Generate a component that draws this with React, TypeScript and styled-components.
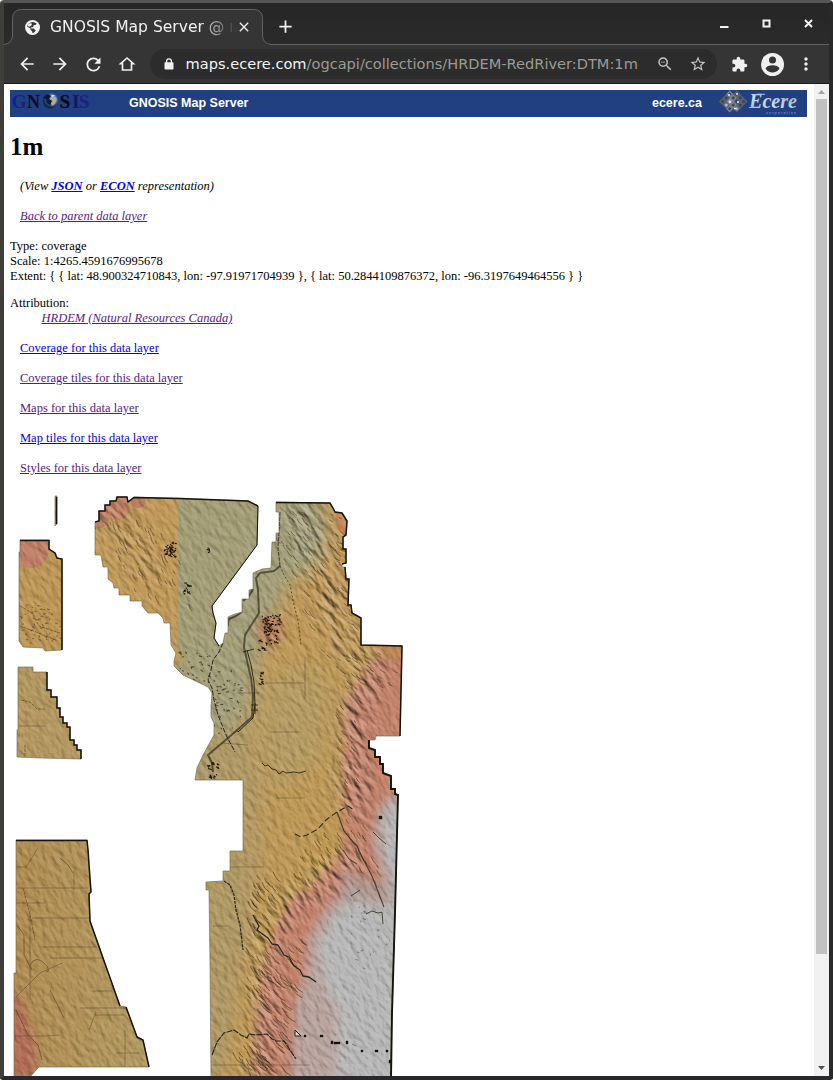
import React from "react";
import styled, { createGlobalStyle } from "styled-components";
import {
  MdArrowBack, MdArrowForward, MdRefresh, MdOutlineZoomOut,
  MdStarBorder, MdMoreVert, MdClose, MdAdd,
} from "react-icons/md";

const GlobalStyle = createGlobalStyle`
  * { box-sizing: border-box; }
  body { margin: 0; background: #fff; overflow: hidden; }
`;

const Window = styled.div`
  display: flex;
  flex-direction: column;
  width: 833px;
  height: 1080px;
  background: #2a2a2c;
  border-top: 3px solid #555;
  border-left: 4px solid #403e3b;
  border-right: 4px solid #29292a;
  border-bottom: 4px solid #28282c;
  border-radius: 4px 4px 3px 3px;
  overflow: hidden;
`;
const TabStrip = styled.div`
  display: flex;
  height: 42px;
  flex: none;
  padding: 6px 0 0 8px;
  background: linear-gradient(#262626, #2b2b2b);
  box-shadow: inset 0 -1px #626262;
`;
const Tab = styled.div`
  position: relative;
  display: flex;
  align-items: center;
  width: 251px;
  height: 36px;
  padding: 0 8px 0 13px;
  color: #f0f0f0;
  > * { flex: none; }
`;
const TabShape = styled.svg`
  position: absolute;
  left: -8px;
  top: 0;
`;
const TabTitle = styled.div`
  position: relative;
  width: 182px;
  margin-left: 10px;
  overflow: hidden;
  white-space: nowrap;
  font: 15.55px/22px "DejaVu Sans", sans-serif;
  mask-image: linear-gradient(90deg, #000 150px, transparent 186px);
`;
const TabClose = styled.div`
  position: relative;
  display: flex;
  margin-left: 4px;
`;
const NewTab = styled.div`
  display: flex;
  align-items: center;
  height: 35px;
  margin-left: 12px;
  color: #f2f2f2;
`;
const WindowButtons = styled.div`
  display: flex;
  margin-left: auto;
  padding: 10px 16px 0 0;
  gap: 33px;
`;
const Toolbar = styled.div`
  display: flex;
  align-items: center;
  height: 39px;
  flex: none;
  padding-left: 6px;
  background: #353535;
  border-bottom: 1px solid #1c1c1c;
`;
const ToolButton = styled.div<{ $w?: number; $color?: string }>`
  display: flex;
  align-items: center;
  justify-content: center;
  flex: none;
  width: ${(p) => p.$w ?? 33.4}px;
  height: 30px;
  color: ${(p) => p.$color ?? "#f0f0f0"};
  svg { flex: none; }
`;
const Omnibox = styled.div`
  display: flex;
  align-items: center;
  flex: none;
  width: 567px;
  height: 30px;
  margin-left: 6px;
  padding-left: 11px;
  border-radius: 15px;
  background: #2c2c2c;
`;
const Address = styled.div`
  flex: none;
  width: 460px;
  margin-left: 9px;
  white-space: nowrap;
  font: 14.58px/22px "DejaVu Sans", sans-serif;
  color: #9b9b96;
  b { font-weight: 400; color: #f3f3f1; }
`;
const Viewport = styled.div`
  display: flex;
  flex: 1;
  min-height: 0;
  background: #fff;
`;
const Page = styled.main`
  width: 810px;
  padding: 6px 7px 0 6px;
  overflow: hidden;
  color: #000;
  font: 12.5px/15px "Liberation Serif", serif;
`;
const Banner = styled.header`
  display: flex;
  align-items: center;
  height: 27px;
  background: #20407f;
  color: #fff;
  font: bold 12.5px/15px "Liberation Sans", sans-serif;
`;
const BannerTitle = styled.div`
  margin: -1px 0 0 29px;
`;
const BannerSite = styled.div`
  margin: -1px 17px 0 auto;
`;
const Heading = styled.h1`
  margin: 15px 0 0;
  padding-bottom: 1px;
  font-size: 25px;
  line-height: 30px;
`;
const Line = styled.div<{ $top?: number; $indent?: number; $italic?: boolean }>`
  margin-top: ${(p) => p.$top ?? 0}px;
  padding-left: ${(p) => p.$indent ?? 0}px;
  font-style: ${(p) => (p.$italic ? "italic" : "normal")};
  white-space: nowrap;
`;
const Link = styled.a<{ $visited?: boolean }>`
  color: ${(p) => (p.$visited ? "#551a8b" : "#0000ee")};
  text-decoration: underline;
`;
const Scrollbar = styled.div`
  display: flex;
  flex-direction: column;
  align-items: center;
  width: 15px;
  background: #f1f1f1;
`;
const Thumb = styled.div`
  width: 11px;
  height: 855px;
  background: #c1c1c1;
`;
const ArrowSlot = styled.div<{ $push?: boolean }>`
  display: flex;
  align-items: center;
  justify-content: center;
  height: ${(p) => (p.$push ? 17 : 15)}px;
  margin-top: ${(p) => (p.$push ? "auto" : "0")};
`;
const Picture = styled.svg`
  display: block;
  position: relative;
`;
const Terrain = styled.g`
  isolation: isolate;
`;
const Relief = styled.g`
  mix-blend-mode: hard-light;
`;

const GlobeIcon = () => (
  <Picture width="15" height="15" viewBox="0 0 15 15">
    <circle cx="7.500" cy="7.500" r="7.500" fill="#f2f2f2" />
    <path d="M7.500 1.900C9 2 10.500 2.600 11.500 3.600L11 4.800L8.700 5.200L8.200 6.900L5.900 7.400L6 8.500H9.200L9.700 10H10.900C10 12 9 13 7.300 13.100L7.200 11.200L5.600 9.900L5.500 8.600L2 6.500C2.600 4 4.800 2 7.500 1.900Z" fill="#353535" />
    <path d="M3.600 3.600L6.500 3.300L6.800 5L4.600 6.800L2.400 6.100Z" fill="#f2f2f2" />
  </Picture>
);
const HomeIcon = () => (
  <Picture width="18" height="18" viewBox="0 0 24 24">
    <path d="M12 4L3.500 11.500H6V20H18V11.500H20.500Z" fill="none" stroke="#f0f0f0" strokeWidth="2.200" />
  </Picture>
);
const LockIcon = () => (
  <Picture width="10" height="12" viewBox="0 0 10 12">
    <rect x="0.500" y="4.200" width="9" height="7.300" rx="0.800" fill="#f0f0f0" />
    <path d="M2.600 5V3.200a2.400 2.400 0 0 1 4.800 0V5" fill="none" stroke="#f0f0f0" strokeWidth="1.300" />
  </Picture>
);
const PuzzleIcon = () => (
  <Picture width="17" height="17" viewBox="0 0 24 24" fill="#f0f0f0">
    <path d="M20.500 11H19V7c0-1.100-.9-2-2-2h-4V3.500a2.500 2.500 0 0 0-5 0V5H4c-1.100 0-2 .9-2 2v3.800h1.500a2.700 2.700 0 0 1 0 5.400H2V20c0 1.100.9 2 2 2h3.800v-1.500a2.700 2.700 0 0 1 5.400 0V22H17c1.100 0 2-.9 2-2v-4h1.500a2.500 2.500 0 0 0 0-5z" />
  </Picture>
);
const AccountIcon = () => (
  <Picture width="23" height="23" viewBox="0 0 23 23">
    <circle cx="11.500" cy="11.500" r="11.500" fill="#f0f0f0" />
    <circle cx="11.500" cy="6.900" r="3.500" fill="#353535" />
    <path d="M4.600 15.700C5 13.300 9 12.300 11.500 12.300S18 13.300 18.400 15.700A8.300 8.300 0 0 1 4.600 15.700Z" fill="#353535" />
  </Picture>
);

const GnosisLogo = () => (
  <Picture width="90" height="27" viewBox="0 0 90 27">
    <defs>
      <radialGradient id="globe" cx="0.62" cy="0.35" r="0.7">
        <stop offset="0" stopColor="#b3c4d6" />
        <stop offset="0.45" stopColor="#406b9e" />
        <stop offset="1" stopColor="#061431" />
      </radialGradient>
    </defs>
    <g fontFamily="Liberation Serif, serif" fontSize="19.500">
      <text x="1.500" y="18" fill="#18208a">G</text>
      <text x="17" y="18" fill="#070c28" textLength="13" lengthAdjust="spacingAndGlyphs">N</text>
      <text x="49.500" y="18" fill="#05060f" fontWeight="bold">S</text>
      <text x="62" y="18" fill="#10186c">I</text>
      <text x="68.500" y="18" fill="#18208a">S</text>
    </g>
    <circle cx="40.500" cy="10.800" r="7.600" fill="url(#globe)" />
    <path d="M34 6l4-2 3 2-2 3 3 2-2 4-3-2-1-4-3-1z" fill="#0a1a33" />
    <path d="M42 8l4-1 1 3-2 4-3 2-1-3 2-2z" fill="#b9aa8e" />
    <path d="M41 5l3 0 1 1-3 1z" fill="#dfe6ea" />
  </Picture>
);

const DIAMONDS: [number, number][] = [
  [11, 3.5], [18, 3.5], [4, 10.8], [11, 10.8], [18, 10.8], [25, 10.8], [11, 18], [18, 18],
  [7.5, 7.2], [14.5, 7.2], [21.5, 7.2], [7.5, 14.4], [14.5, 14.4], [21.5, 14.4],
];
const EcereLogo = () => (
  <Picture width="88" height="27" viewBox="0 0 88 27">
    <defs>
      <linearGradient id="ecere" x1="0" y1="1" x2="1" y2="0">
        <stop offset="0" stopColor="#74bfe0" />
        <stop offset="0.4" stopColor="#d3dce5" />
        <stop offset="1" stopColor="#8fa0bd" />
      </linearGradient>
    </defs>
    {DIAMONDS.map(([x, y], i) => (
      <rect key={i} x={x - 1.7} y={y - 1.3} width="4" height="4"
        transform={`rotate(45 ${x} ${y})`}
        fill={i % 4 === 3 ? "#9dbbe0" : "#2c4678"} stroke={i % 3 ? "#626267" : "#858783"} strokeWidth="1.300" />
    ))}
    <path d="M9 5h2M17 4h2M10 12h2M18 12h2M15 18.500h2" stroke="#e6f2ff" strokeWidth="1.300" />
    <text x="30" y="18.300" fontFamily="Liberation Serif, serif" fontStyle="italic" fontSize="20"
      textLength="48" lengthAdjust="spacingAndGlyphs" fill="url(#ecere)">Ecere</text>
    <path d="M33 5.200q5-1.700 13-0.900" stroke="#b9c6d6" strokeWidth="1" fill="none" />
    <text x="47" y="23.500" fontFamily="Liberation Sans, sans-serif" fontSize="3.500" textLength="30" fill="#6f8dbb">corporation</text>
  </Picture>
);

/* Coverage outline: five disjoint survey blocks. */
const BLOCKS = [
  "M55 496L57 496L57 524L55 526Z",
  "M20 540H49V549L55 553L57 558L62 559V650L45 651L43 648L23 647L19 641V552H20Z",
  "M18 667H33V672H47V690H51V697H57V708H60V717H63V723H67V727H70V740H74V745H77V750H81V759L41 758L17 757V730H18Z",
  "M16 840H87L88 850L89 870L91 892L89 894L90 921L103 958L120 1006L126 1007L137 1037L143 1040L149 1067H39L29 1078H14V973H16Z",
  "M95 522L99 521V511H105V505H110V501H116L117 497H127L128 502L134 497L180 498.500L248 501L258 506L257 545L212 606L213 613L216 623L214 638L219 646L223 643L225 633H228V617L232 615L242 612V599H249V590L253 589V573L262 569L271 568L272 542H276V533H279V512H276V502L330 503L333 508L335 512L342 513L347 521L346 535L343 537V549H346V563L342 564V567H345L346 579H349L348 605H351L352 613L361 618V645L402 646L400 736H376L375 740H369V748L375 750V757H380V764H383V773L386 774L391 776V789H395V794L398 795L395 913L392 1013L391 1078H211L210 963L209 890H206V882L223 881V871H230V851H243V780H195L197 768L203 755L214 735V723L211 717V707L212 693L208 687L183 675L174 666V661L176 653L171 645L170 623H164L163 618L158 613H148L142 606V601H130V595H119V588H114L113 583L108 579V567H103L101 555H95Z",
].join("");

/* Deterministic noise so the ridges are the same on every render. */
const makeRandom = (seed: number) => () => {
  seed = (seed * 1664525 + 1013904223) % 4294967296;
  return seed / 4294967296;
};
type Band = { pts: [number, number][]; spread: number; n: number; dx: number; dy: number };
const BANDS: Band[] = [
  { pts: [[290, 510], [315, 560], [340, 630]], spread: 32, n: 60, dx: 5, dy: 6 },
  { pts: [[335, 510], [343, 570], [352, 630]], spread: 7, n: 34, dx: 5, dy: 3 },
  { pts: [[110, 515], [150, 560], [170, 600]], spread: 30, n: 45, dx: 3, dy: 6 },
  { pts: [[345, 650], [380, 690]], spread: 28, n: 32, dx: 5, dy: 4 },
  { pts: [[345, 710], [350, 790]], spread: 10, n: 24, dx: 3, dy: 4 },
  { pts: [[265, 870], [255, 930], [256, 1000]], spread: 12, n: 55, dx: 6, dy: 8 },
  { pts: [[285, 935], [275, 990], [265, 1065]], spread: 18, n: 58, dx: 9, dy: 9 },
  { pts: [[245, 1050], [262, 1076]], spread: 14, n: 22, dx: 8, dy: 10 },
  { pts: [[300, 880], [335, 830]], spread: 16, n: 24, dx: 4, dy: 6 },
  { pts: [[347, 810], [375, 880]], spread: 9, n: 20, dx: 4, dy: 6 },
];
const ridges = (b: Band, seed: number) => {
  const rnd = makeRandom(seed);
  let d = "";
  for (let i = 0; i < b.n; i++) {
    const t = rnd() * (b.pts.length - 1);
    const k = Math.floor(t);
    const f = t - k;
    const x = b.pts[k][0] * (1 - f) + b.pts[k + 1][0] * f + (rnd() - 0.5) * 2 * b.spread;
    const y = b.pts[k][1] * (1 - f) + b.pts[k + 1][1] * f + (rnd() - 0.5) * 12;
    const s = 0.4 + rnd() * 0.9;
    d += `M${x.toFixed(1)} ${y.toFixed(1)}q${(b.dx * s * 0.3).toFixed(1)} ${(b.dy * s * 0.7).toFixed(1)} ${(b.dx * s).toFixed(1)} ${(b.dy * s).toFixed(1)}`;
  }
  return d;
};
const specks = (x: number, y: number, w: number, h: number, n: number, seed: number) => {
  const rnd = makeRandom(seed);
  let d = "";
  for (let i = 0; i < n; i++) {
    d += `M${(x + rnd() * w).toFixed(1)} ${(y + rnd() * h).toFixed(1)}l${(rnd() * 2.4).toFixed(1)} ${(rnd() * 2 - 0.6).toFixed(1)}`;
  }
  return d;
};

const ElevationMap = () => (
  <Picture width="400" height="600" viewBox="10 476 400 600">
    <defs>
      <clipPath id="cover"><path d={BLOCKS} /></clipPath>
      <linearGradient id="south" x1="0" y1="0" x2="1" y2="0">
        <stop offset="0" stopColor="#b08c50" />
        <stop offset="1" stopColor="#b49b62" />
      </linearGradient>
      <filter id="soft4" x="-20%" y="-20%" width="140%" height="140%"><feGaussianBlur stdDeviation="5" /></filter>
      <filter id="soft9" x="-30%" y="-30%" width="160%" height="160%"><feGaussianBlur stdDeviation="9" /></filter>
      <filter id="fine" x="0" y="0" width="1" height="1" colorInterpolationFilters="sRGB">
        <feTurbulence type="fractalNoise" baseFrequency="0.2 0.1" numOctaves="4" seed="7" />
        <feColorMatrix values="0 0 0 0 0  0 0 0 0 0  0 0 0 0 0  1 0 0 0 0" />
        <feDiffuseLighting surfaceScale="0.750" diffuseConstant="0.610" lightingColor="#fff">
          <feDistantLight azimuth="165" elevation="55" />
        </feDiffuseLighting>
      </filter>
      <filter id="rough" x="0" y="0" width="1" height="1" colorInterpolationFilters="sRGB">
        <feTurbulence type="fractalNoise" baseFrequency="0.17 0.05" numOctaves="4" seed="21" />
        <feColorMatrix values="0 0 0 0 0  0 0 0 0 0  0 0 0 0 0  1 0 0 0 0" />
        <feDiffuseLighting surfaceScale="2.600" diffuseConstant="0.620" lightingColor="#fff">
          <feDistantLight azimuth="165" elevation="55" />
        </feDiffuseLighting>
      </filter>
      <mask id="hills" maskUnits="userSpaceOnUse" x="0" y="470" width="420" height="610">
        <g filter="url(#soft9)" fill="none" stroke="#fff" strokeLinecap="round">
          <path d="M300 510L320 570L340 630L370 670L355 720L353 800" strokeWidth="36" />
          <path d="M110 515L150 570" strokeWidth="36" stroke="#aaa" />
          <path d="M350 860L290 900L262 940L265 1000L262 1080" strokeWidth="34" />
          <circle cx="270" cy="632" r="8" strokeWidth="14" />
        </g>
      </mask>
    </defs>

    <g clipPath="url(#cover)">
      <Terrain>
        <rect x="0" y="470" width="420" height="610" fill="#c29a58" />
        <rect x="10" y="530" width="60" height="130" fill="#bd9755" />
        <rect x="10" y="660" width="80" height="110" fill="#b59860" />
        <rect x="10" y="835" width="145" height="245" fill="url(#south)" />
        {/* Low valley floor */}
        <path d="M177 490H262V560L240 700H200L177 690Z" fill="#a49e76" />
        <g filter="url(#soft9)">
          <path d="M270 490H322L328 545L312 570L290 580L265 640L250 700L240 735L215 800H180V690L225 600Z" fill="#a4a07a" />
          <path d="M205 735L250 725L262 790L258 860L225 1080H200V870L240 840V790H190Z" fill="#b09965" />
          <path d="M285 660L345 640L345 700L340 790L335 830L300 860L262 880V780Z" fill="#be9956" />
          <path d="M250 690L300 660L330 690L320 760L270 790Z" fill="#b69b62" />
          <path d="M340 800L300 870L262 910L235 1076H250L262 960L340 880Z" fill="#c19a50" />
        </g>
        <path d="M177 498V640" stroke="#6f6340" strokeWidth="4" opacity="0.6" filter="url(#soft4)" />
        {/* Escarpment */}
        <g filter="url(#soft4)">
          <path d="M410 655L375 658L352 690L344 712L343 800L342 852L318 880L290 900L274 930L262 975L254 1040V1085H410Z" fill="#c5836a" />
          <path d="M372 640H410V660L385 662Z" fill="#bd8755" />
          <path d="M399 792L384 800L375 822L373 848L385 882L382 900L352 886L326 908L310 935L307 970L296 1005L291 1085H410V792Z" fill="#b9a49e" />
          <path d="M402 800L386 812L382 840L392 880V905L355 900L335 915L318 945L324 980L338 1010L336 1085H410Z" fill="#b8b8b8" />
          <path d="M342 870L392 885L385 908L340 895Z" fill="#ad9b96" opacity="0.8" />
          <circle cx="270" cy="630" r="13" fill="#b97a50" />
          <path d="M8 985L22 1000L34 1040L38 1080H8Z" fill="#b26d55" />
        </g>
        <g opacity="0.9">
          <circle cx="31" cy="550" r="18" fill="#c07d6a" />
          <circle cx="117" cy="507" r="13.500" fill="#c48066" />
          <circle cx="100" cy="519" r="9" fill="#bd7d62" />
          <circle cx="138" cy="500" r="8" fill="#bb775f" />
        </g>
        <path d="M335 508l9 4 5 12-4 12-8-7z" fill="#c98759" />

        <Relief>
          <rect x="-500" y="100" width="1400" height="1400" transform="rotate(-30 210 780)" filter="url(#fine)" />
        </Relief>
        <Relief mask="url(#hills)">
          <rect x="-500" y="100" width="1400" height="1400" transform="rotate(-36 210 780)" filter="url(#rough)" />
        </Relief>
      </Terrain>

      <g fill="none" stroke="#2b1d0d" strokeLinecap="round">
        {BANDS.map((b, i) => (
          <path key={i} d={ridges(b, 11 + i * 37)} strokeWidth={i > 3 && i < 8 ? 0.9 : 0.8} opacity="0.55" />
        ))}
      </g>
      <g fill="none" stroke="#ffd9a0" strokeLinecap="round" transform="translate(-1.500 1)" opacity="0.25">
        {BANDS.map((b, i) => (
          <path key={i} d={ridges(b, 11 + i * 37)} strokeWidth="0.900" />
        ))}
      </g>

      {/* Floodway and river */}
      <g fill="none" stroke="#29281a" strokeLinejoin="round">
        <path d="M280 512L279 532L278 548L280 566" strokeWidth="1.200" strokeDasharray="4 1" opacity="0.7" />
        <path d="M280 566L274 571L260 573L256 578L258 590L259 613L245 635L244 647L248 665L251 678L253 695L252 717L228 738L208 755L212 763L213 772" strokeWidth="2" opacity="0.65" />
        <path d="M247 650L251 665L254 682L255 705L253 718L238 732" strokeWidth="1" />
        <path d="M280 566L284 575L290 585L294 605L298 620L301 645" strokeWidth="0.700" strokeDasharray="2 2" />
        <path d="M223 643L219 652L213 660L211 670L208 680L212 688L214 700L218 715L226 735L235 752" strokeWidth="1" strokeDasharray="5 1.500" />
        <path d="M253 589L249 596L243 601M242 612L236 616L229 619L226 632" strokeWidth="2" opacity="0.7" />
        <path d="M262 763L265 766L268 765L272 769L276 770L279 774L283 771L286 773L294 772L299 773L306 771M243 652L254 649M251 705H258M251 710H258M255 703V714" strokeWidth="0.900" />
        <path d="M224 881L230 885L234 895L236 910L240 925L243 950" strokeWidth="1.200" strokeDasharray="3 1" />
        <path d="M253 915L259 926L257 930L268 938L272 944L278 945L284 955L289 957L294 966L300 970L303 976L309 977L316 982" strokeWidth="1.300" />
        <path d="M212 1055L217 1042L224 1033L234 1030L241 1035L247 1038L249 1034L256 1035L267 1034L272 1039L276 1041L284 1041L290 1050L296 1059" strokeWidth="1.200" strokeDasharray="6 1" />
        <path d="M295 834L301 837L307 835L318 829L326 820L337 812L348 806L354 810" strokeWidth="1.100" strokeDasharray="6 3" />
        <path d="M337 812L344 831L352 841L357 846L362 857L372 876L384 907" strokeWidth="1.100" opacity="0.8" />
        <path d="M343 850L349 859L357 864M373 832L379 838L386 844M351 896L360 890M366 914L372 911L378 913L382 912L383 924" strokeWidth="1" opacity="0.8" />
      </g>
      <g fill="none" stroke="#3b2d18" strokeWidth="0.700" opacity="0.5">
        <path d="M265 683H304M305 657V699M237 693H260M270 732H300M221 743L248 745M230 867H264M213 926H228M276 798H305M210 1065H310" />
        <path d="M17 867H26L38 848M17 888H88M32 918H90M42 947H97M50 958H103M80 1008H126M15 1036H46L60 1035M92 991H112M16 903H45M95 1015H124M116 1053H140M125 1030V1067M89 1030L96 1012M16 997L40 973L62 963M19 726H46M30 910V1000M74 870V890" />
        <path d="M21 700L30 702L37 709L46 709M25 745V757M23 888L30 915L35 940M20 606L32 613L39 626L60 633M20 626L36 632L58 641" strokeWidth="1" strokeDasharray="3 1" />
        <path d="M17 925L24 935L24 955L32 970M30 965Q36 955 44 963T46 972M16 1010L28 1035L38 1045L42 1060M50 990L60 1010L64 1018M60 858L68 865L73 873" strokeWidth="1" />
      </g>
      <g fill="none" stroke="#1d150b" strokeWidth="1.100" strokeLinecap="round">
        <path d={specks(213, 665, 28, 70, 42, 5)} opacity="0.65" />
        <path d={specks(178, 652, 32, 30, 28, 8)} opacity="0.65" />
        <path d={specks(164, 542, 12, 17, 38, 14)} />
        <path d={specks(183, 583, 7, 11, 17, 19)} />
        <path d={specks(262, 613, 18, 12, 34, 28)} />
        <path d={specks(264, 625, 14, 20, 34, 33)} />
        <path d={specks(257, 640, 8, 10, 10, 42)} />
        <path d={specks(259, 672, 4, 12, 12, 47)} />
        <path d={specks(207, 548, 5, 6, 6, 49)} />
        <path d={specks(20, 605, 41, 38, 48, 52)} opacity="0.4" />
        <path d={specks(207, 762, 11, 16, 18, 61)} />
        <path d={specks(350, 900, 40, 80, 20, 88)} opacity="0.35" />
      </g>
      <path d="M176 653l6 8-2 5M175 660l4-6" fill="none" stroke="#c99b50" strokeWidth="2" />
      <path d="M295 1030l6 6h-6z" fill="#d6d6c9" stroke="#222" />
      <path d="M304 1035h2v2h-2zM320 1035h3v2h-3zM331 1041h2v3h-2zM334 1042h6v2h-6zM346 1041h2v3h-2zM352 1044l4 2M361 1050h2v2h-2zM375 1050h3v2h-3zM386 1050h2v2h-2zM379 816h3v3h-3zM389 1060h2v3h-2z" fill="#17130e" stroke="#17130e" strokeWidth="0.400" />
    </g>
    <path d={BLOCKS} fill="none" stroke="#6e6948" strokeWidth="0.800" opacity="0.8" />
    <g fill="none" stroke="#15130b" strokeWidth="1.500">
      <path d="M16 840.500H87L88 850L91 892L89 894L90 921L103 958L120 1006M126 1007L137 1037L143 1040L149 1067" />
      <path d="M20 540.500H49V549L55 553L57 558L62 559V650M56.500 497V524" />
      <path d="M47 672V690H51V697H57V708H60V717H63V723H67V727H70V740H74V745H77V750H81V759" />
      <path d="M95 522L99 521V511H105V505H110V501H116L117 497H127L128 502L134 497.500L180 498.500L248 501L258 506" />
      <path d="M276 502.500L330 503L333 508L335 512L342 513L347 521L346 535L343 537V549H346V563L342 564M345 567L346 579H349L348 605H351L352 613L361 618V645L402 646L400 736" />
      <path d="M369 740V748L375 750V757H380V764H383V773L391 776V789H395V794L398 795L395 913L392 1013L391 1078" strokeWidth="1.900" />
      <path d="M258 506L257 545L212 606L213 613L216 623L214 638L219 646" strokeWidth="1" />
    </g>
  </Picture>
);

const LAYER_LINKS: { text: string; visited: boolean }[] = [
  { text: "Coverage for this data layer", visited: false },
  { text: "Coverage tiles for this data layer", visited: true },
  { text: "Maps for this data layer", visited: true },
  { text: "Map tiles for this data layer", visited: false },
  { text: "Styles for this data layer", visited: true },
];

export default function App() {
  return (
    <>
      <GlobalStyle />
      <Window>
        <TabStrip>
          <Tab>
            <TabShape width="268" height="36" viewBox="0 0 268 36">
              <path d="M0 36V34.500Q8.500 34.500 8.500 26V9.500Q8.500 0.500 17.500 0.500H249.500Q258.500 0.500 258.500 9.500V26Q258.500 34.500 267 35.500V36Z" fill="#353535" />
              <path d="M0 35.500Q8.500 34.500 8.500 26V9.500Q8.500 0.500 17.500 0.500H249.500Q258.500 0.500 258.500 9.500V26Q258.500 34.500 267 35.500" fill="none" stroke="#646464" />
            </TabShape>
            <GlobeIcon />
            <TabTitle>GNOSIS Map Server @ m</TabTitle>
            <TabClose><MdClose size={16} /></TabClose>
          </Tab>
          <NewTab><MdAdd size={21} /></NewTab>
          <WindowButtons>
            <Picture width="9" height="9"><path d="M0 8h8.500" stroke="#f2f2f2" strokeWidth="2" /></Picture>
            <Picture width="9" height="9"><path d="M1.500 1.500h6v6h-6z" fill="none" stroke="#f2f2f2" strokeWidth="2" /></Picture>
            <Picture width="9" height="9"><path d="M1 1l7 7M8 1l-7 7" stroke="#f2f2f2" strokeWidth="2" /></Picture>
          </WindowButtons>
        </TabStrip>
        <Toolbar>
          <ToolButton><MdArrowBack size={20} /></ToolButton>
          <ToolButton><MdArrowForward size={20} /></ToolButton>
          <ToolButton><MdRefresh size={21} /></ToolButton>
          <ToolButton><HomeIcon /></ToolButton>
          <Omnibox>
            <ToolButton $w={16}><LockIcon /></ToolButton>
            <Address><b>maps.ecere.com</b>/ogcapi/collections/HRDEM-RedRiver:DTM:1m</Address>
            <ToolButton $w={38} $color="#c4c4c2"><MdOutlineZoomOut size={18} /></ToolButton>
            <ToolButton $w={29} $color="#c4c4c2"><MdStarBorder size={18} /></ToolButton>
          </Omnibox>
          <ToolButton $w={45}><PuzzleIcon /></ToolButton>
          <ToolButton $w={22}><AccountIcon /></ToolButton>
          <ToolButton $w={45}><MdMoreVert size={20} /></ToolButton>
        </Toolbar>
        <Viewport>
          <Page>
            <Banner>
              <GnosisLogo />
              <BannerTitle>GNOSIS Map Server</BannerTitle>
              <BannerSite>ecere.ca</BannerSite>
              <EcereLogo />
            </Banner>
            <Heading>1m</Heading>
            <Line $top={16} $indent={10} $italic>
              (View <b><Link>JSON</Link></b> or <b><Link>ECON</Link></b> representation)
            </Line>
            <Line $top={15} $indent={10} $italic><Link $visited>Back to parent data layer</Link></Line>
            <Line $top={15}>Type: coverage</Line>
            <Line>Scale: 1:4265.4591676995678</Line>
            <Line>{"Extent: { { lat: 48.900324710843, lon: -97.91971704939 }, { lat: 50.2844109876372, lon: -96.3197649464556 } }"}</Line>
            <Line $top={12}>Attribution:</Line>
            <Line $indent={31.5} $italic><Link $visited>HRDEM (Natural Resources Canada)</Link></Line>
            {LAYER_LINKS.map((l) => (
              <Line key={l.text} $top={15} $indent={10}><Link $visited={l.visited}>{l.text}</Link></Line>
            ))}
            <ElevationMap />
          </Page>
          <Scrollbar>
            <ArrowSlot><Picture width="7" height="4"><path d="M0 4L3.500 0L7 4z" fill="#a3a3a3" /></Picture></ArrowSlot>
            <Thumb />
            <ArrowSlot $push><Picture width="7" height="4"><path d="M0 0h7L3.500 4z" fill="#505050" /></Picture></ArrowSlot>
          </Scrollbar>
        </Viewport>
      </Window>
    </>
  );
}
